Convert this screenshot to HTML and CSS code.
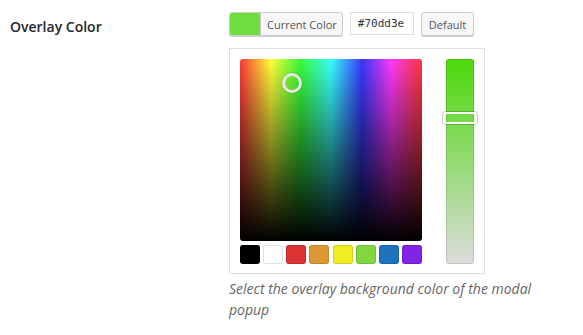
FILE: index.html
```html
<!DOCTYPE html>
<html lang="en">
<head>
    <meta charset="UTF-8">
    <meta name="viewport" content="width=device-width, initial-scale=1.0">
    <title>Overlay Color</title>
    <link rel="stylesheet" href="styles.css">
</head>
<body>
    <div class="form-row">
        <div class="field-label">Overlay Color</div>
        <div class="field-body">
            <div class="color-bar">
                <button type="button" class="color-result">
                    <span class="result-swatch"></span>
                    <span class="result-text">Current Color</span>
                </button>
                <input type="text" class="hex-input" value="#70dd3e">
                <button type="button" class="wp-button">Default</button>
            </div>

            <div class="picker">
                <div class="picker-main">
                    <div class="square">
                        <span class="square-handle" style="left: 42px; top: 14px;"></span>
                    </div>
                    <div class="palette">
                        <span class="swatch" style="background-color: #000000;"></span>
                        <span class="swatch" style="background-color: #ffffff;"></span>
                        <span class="swatch" style="background-color: #dd3333;"></span>
                        <span class="swatch" style="background-color: #dd9933;"></span>
                        <span class="swatch" style="background-color: #eeee22;"></span>
                        <span class="swatch" style="background-color: #81d742;"></span>
                        <span class="swatch" style="background-color: #1e73be;"></span>
                        <span class="swatch" style="background-color: #8224e3;"></span>
                    </div>
                </div>
                <div class="strip">
                    <span class="strip-handle" style="top: 53px;"></span>
                </div>
            </div>

            <p class="description">Select the overlay background color of the modal popup</p>
        </div>
    </div>
</body>
</html>
```

FILE: styles.css
```css
body {
    margin: 0;
    background: #ffffff;
    font-family: "Open Sans", "Noto Sans", sans-serif;
    color: #23282d;
}

.form-row {
    display: grid;
    grid-template-columns: 219px 1fr;
    padding: 12px 10px 0 10px;
}

.field-label {
    font-size: 14px;
    font-weight: 600;
    line-height: 19px;
    padding-top: 5px;
}

.color-bar {
    display: flex;
    align-items: flex-start;
    gap: 7px;
    height: 24px;
}

.color-result {
    display: flex;
    align-items: stretch;
    height: 24px;
    padding: 0;
    margin: 0;
    border: 1px solid #cccccc;
    border-radius: 3px;
    background: #f7f7f7;
    box-shadow: 0 1px 0 #cccccc;
    overflow: hidden;
    cursor: pointer;
    font-family: inherit;
}

.result-swatch {
    width: 30px;
    background: #70dd3e;
    border-right: 1px solid #cccccc;
}

.result-text {
    display: flex;
    align-items: center;
    padding: 0 5px 0 6px;
    font-size: 11px;
    color: #555555;
}

.hex-input {
    box-sizing: border-box;
    width: 64px;
    height: 23px;
    margin: 0;
    padding: 0 0 0 7px;
    border: 1px solid #dddddd;
    font-family: "DejaVu Sans Mono", "Liberation Mono", monospace;
    font-size: 11px;
    color: #32373c;
    outline: none;
}

.wp-button {
    box-sizing: border-box;
    height: 24px;
    margin: 0;
    padding: 0 7px;
    border: 1px solid #cccccc;
    border-radius: 3px;
    background: #f7f7f7;
    box-shadow: 0 1px 0 #cccccc;
    font-family: inherit;
    font-size: 11px;
    color: #555555;
    cursor: pointer;
}

.picker {
    box-sizing: border-box;
    display: flex;
    gap: 24px;
    width: 256px;
    margin-top: 12px;
    padding: 10px 10px 9px 10px;
    border: 1px solid #dfdfdf;
}

.picker-main {
    display: flex;
    flex-direction: column;
    gap: 4px;
    width: 182px;
}

.square {
    position: relative;
    height: 182px;
    border-radius: 3px;
    background:
        linear-gradient(to bottom, rgba(0, 0, 0, 0), #000000),
        linear-gradient(rgba(255, 255, 255, 0.22), rgba(255, 255, 255, 0.22)),
        linear-gradient(to right, #ff0000, #ffff00 17%, #00ff00 33%, #00ffff 50%, #0000ff 67%, #ff00ff 83%, #ff0000);
}

.square-handle {
    position: absolute;
    box-sizing: border-box;
    width: 20px;
    height: 20px;
    border: 3px solid #e6e6e6;
    border-radius: 50%;
    box-shadow: 0 0 0 1px rgba(0, 0, 0, 0.08);
}

.palette {
    display: flex;
    justify-content: space-between;
}

.swatch {
    width: 20px;
    height: 19px;
    border-radius: 3px;
    box-shadow: inset 0 0 0 1px rgba(0, 0, 0, 0.12);
}

.strip {
    position: relative;
    width: 28px;
    height: 205px;
    border-radius: 3px;
    background: linear-gradient(to bottom, #4cd90a, #dcdcdc);
    box-shadow: inset 0 0 0 1px rgba(0, 0, 0, 0.1);
}

.strip-handle {
    position: absolute;
    left: -3px;
    box-sizing: border-box;
    width: 34px;
    height: 12px;
    border: 2px solid #ffffff;
    border-radius: 3px;
    box-shadow: 0 0 0 1px rgba(0, 0, 0, 0.2);
}

.description {
    margin: 4px 0 0 0;
    font-size: 14px;
    font-style: italic;
    line-height: 21px;
    color: #666666;
    max-width: 330px;
}
```
